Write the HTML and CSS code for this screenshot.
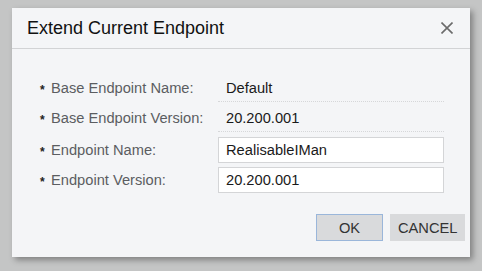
FILE: index.html
```html
<!DOCTYPE html>
<html lang="en">
<head>
    <meta charset="UTF-8">
    <meta name="viewport" content="width=device-width, initial-scale=1.0">
    <title>Extend Current Endpoint</title>
    <link rel="stylesheet" href="styles.css">
</head>
<body>
    <div class="dialog">
        <div class="dialog-header">
            <span class="dialog-title">Extend Current Endpoint</span>
            <button class="close" title="Close">
                <svg width="12" height="12" viewBox="0 0 12 12">
                    <path d="M0.5 0.5 L11.5 11.5 M11.5 0.5 L0.5 11.5" stroke="#6b6b6b" stroke-width="1.6" fill="none"/>
                </svg>
            </button>
        </div>
        <div class="form">
            <div class="row">
                <span class="label"><span class="req">*</span>Base Endpoint Name:</span>
                <span class="value">Default</span>
            </div>
            <div class="row">
                <span class="label"><span class="req">*</span>Base Endpoint Version:</span>
                <span class="value">20.200.001</span>
            </div>
            <div class="row row-input">
                <span class="label"><span class="req">*</span>Endpoint Name:</span>
                <input type="text" class="field" value="RealisableIMan">
            </div>
            <div class="row row-input">
                <span class="label"><span class="req">*</span>Endpoint Version:</span>
                <input type="text" class="field" value="20.200.001">
            </div>
        </div>
        <div class="buttons">
            <button class="btn btn-ok">OK</button>
            <button class="btn btn-cancel">CANCEL</button>
        </div>
    </div>
</body>
</html>
```

FILE: styles.css
```css
body {
    margin: 0;
    padding: 8px 12px;
    background-color: #c4c5c5;
    font-family: "Liberation Sans", Arial, sans-serif;
    height: 271px;
    box-sizing: border-box;
}

.dialog {
    width: 458px;
    height: 249px;
    background-color: #f4f5f7;
    box-shadow: 3px 3px 6px rgba(0, 0, 0, 0.35);
    display: flex;
    flex-direction: column;
}

.dialog-header {
    height: 40px;
    border-bottom: 1px solid #d2d3d5;
    display: flex;
    align-items: center;
    justify-content: space-between;
    padding: 0 17px 0 15px;
}

.dialog-title {
    font-size: 18px;
    color: #111;
    padding-top: 1px;
}

.close {
    border: none;
    background: none;
    padding: 0;
    width: 12px;
    height: 12px;
    display: flex;
    cursor: pointer;
}

.form {
    padding: 24px 26px 0 27px;
}

.row {
    display: flex;
    align-items: center;
    height: 30px;
}

.row-input {
    height: 26px;
    margin-top: 4px;
}

.label {
    flex: 0 0 179px;
    font-size: 11pt;
    color: #5b5d61;
    padding-top: 1px;
}

.row-input .label {
    padding-top: 0;
}

.req {
    display: inline-block;
    width: 11px;
    padding-left: 1px;
    font-size: 12px;
    font-weight: bold;
    color: #222;
    vertical-align: -1px;
}

.value {
    flex: 1;
    height: 29px;
    box-sizing: border-box;
    line-height: 30px;
    padding-left: 8px;
    font-size: 11pt;
    color: #1a1a1a;
    border-bottom: 1px dotted #d6d7d9;
    align-self: flex-start;
}

.field {
    flex: 1;
    height: 26px;
    box-sizing: border-box;
    border: 1px solid #d4d5d7;
    background-color: #fff;
    padding: 0 7px;
    font-family: inherit;
    font-size: 11pt;
    color: #1a1a1a;
    outline: none;
}

.buttons {
    display: flex;
    justify-content: flex-end;
    gap: 7px;
    padding: 21px 5px 0 0;
}

.btn {
    height: 27px;
    padding: 0 7px;
    border: 1px solid #d9dadc;
    background-color: #d9dadc;
    font-family: inherit;
    font-size: 11pt;
    color: #333;
    cursor: pointer;
}

.btn-ok {
    width: 67px;
    border-color: #9ab6da;
}

.btn-cancel {
    width: 75px;
}
```
